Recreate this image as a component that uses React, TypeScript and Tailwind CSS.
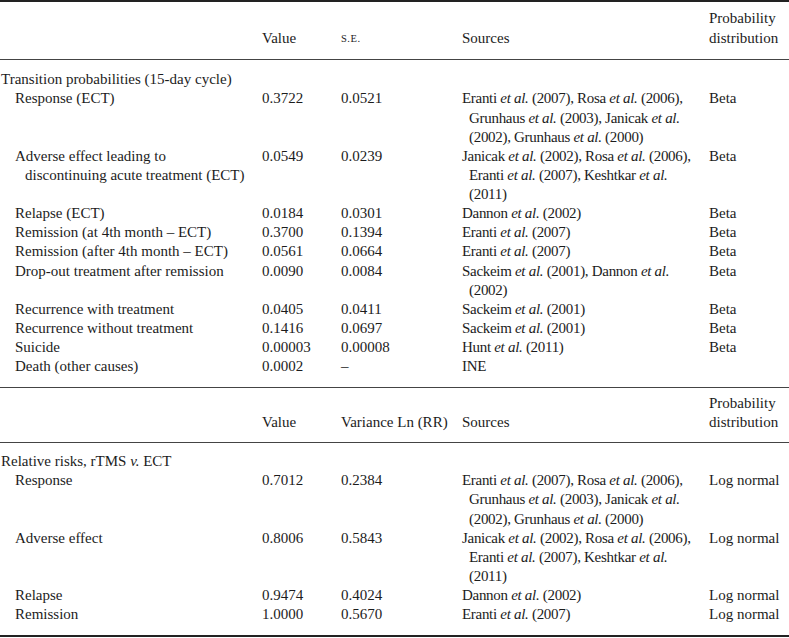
import React from 'react';

type Row = {
  label: React.ReactNode;
  value: string;
  spread: string;
  sources: React.ReactNode;
  dist?: string;
};

const cols = 'grid grid-cols-[262px_79px_121px_247px_80px]';

const responseSources = (
  <>
    Eranti <i>et al.</i> (2007), Rosa <i>et al.</i> (2006),
    <br />
    Grunhaus <i>et al.</i> (2003), Janicak <i>et al.</i>
    <br />
    (2002), Grunhaus <i>et al.</i> (2000)
  </>
);

const adverseSources = (
  <>
    Janicak <i>et al.</i> (2002), Rosa <i>et al.</i> (2006),
    <br />
    Eranti <i>et al.</i> (2007), Keshtkar <i>et al.</i>
    <br />
    (2011)
  </>
);

const transitionRows: Row[] = [
  { label: 'Response (ECT)', value: '0.3722', spread: '0.0521', sources: responseSources, dist: 'Beta' },
  {
    label: (
      <>
        Adverse effect leading to
        <br />
        discontinuing acute treatment (ECT)
      </>
    ),
    value: '0.0549',
    spread: '0.0239',
    sources: adverseSources,
    dist: 'Beta',
  },
  { label: 'Relapse (ECT)', value: '0.0184', spread: '0.0301', sources: <>Dannon <i>et al.</i> (2002)</>, dist: 'Beta' },
  { label: 'Remission (at 4th month – ECT)', value: '0.3700', spread: '0.1394', sources: <>Eranti <i>et al.</i> (2007)</>, dist: 'Beta' },
  { label: 'Remission (after 4th month – ECT)', value: '0.0561', spread: '0.0664', sources: <>Eranti <i>et al.</i> (2007)</>, dist: 'Beta' },
  {
    label: 'Drop-out treatment after remission',
    value: '0.0090',
    spread: '0.0084',
    sources: (
      <>
        Sackeim <i>et al.</i> (2001), Dannon <i>et al.</i>
        <br />
        (2002)
      </>
    ),
    dist: 'Beta',
  },
  { label: 'Recurrence with treatment', value: '0.0405', spread: '0.0411', sources: <>Sackeim <i>et al.</i> (2001)</>, dist: 'Beta' },
  { label: 'Recurrence without treatment', value: '0.1416', spread: '0.0697', sources: <>Sackeim <i>et al.</i> (2001)</>, dist: 'Beta' },
  { label: 'Suicide', value: '0.00003', spread: '0.00008', sources: <>Hunt <i>et al.</i> (2011)</>, dist: 'Beta' },
  { label: 'Death (other causes)', value: '0.0002', spread: '–', sources: 'INE' },
];

const riskRows: Row[] = [
  { label: 'Response', value: '0.7012', spread: '0.2384', sources: responseSources, dist: 'Log normal' },
  { label: 'Adverse effect', value: '0.8006', spread: '0.5843', sources: adverseSources, dist: 'Log normal' },
  { label: 'Relapse', value: '0.9474', spread: '0.4024', sources: <>Dannon <i>et al.</i> (2002)</>, dist: 'Log normal' },
  { label: 'Remission', value: '1.0000', spread: '0.5670', sources: <>Eranti <i>et al.</i> (2007)</>, dist: 'Log normal' },
];

function Header({ spreadLabel, className }: { spreadLabel: React.ReactNode; className: string }) {
  return (
    <div className={`${cols} items-end ${className}`}>
      <div />
      <div>Value</div>
      <div>{spreadLabel}</div>
      <div>Sources</div>
      <div>
        Probability
        <br />
        distribution
      </div>
    </div>
  );
}

function Body({ title, rows, className }: { title: React.ReactNode; rows: Row[]; className: string }) {
  return (
    <div className={`${cols} ${className}`}>
      <div className="col-span-5 pl-[1px]">{title}</div>
      {rows.map((r, i) => (
        <React.Fragment key={i}>
          <div className="pl-[25px] -indent-[10px]">{r.label}</div>
          <div>{r.value}</div>
          <div>{r.spread}</div>
          <div className="pl-[7px] -indent-[7px] tracking-[-0.3px]">{r.sources}</div>
          <div>{r.dist}</div>
        </React.Fragment>
      ))}
    </div>
  );
}

export default function App() {
  return (
    <div className="w-[789px] h-[638px] bg-white text-[#1c1c1c] font-['Liberation_Serif',serif] text-[15px] leading-[19.13px] whitespace-nowrap">
      <div className="h-[2px] bg-[#222]" />
      <Header spreadLabel={<span className="text-[10.5px] tracking-[0.5px]">S.E.</span>} className="pt-[7.4px] pb-[11.3px]" />
      <div className="h-px bg-[#444]" />
      <Body title="Transition probabilities (15-day cycle)" rows={transitionRows} className="pt-[10.4px] pb-[10.5px]" />
      <div className="h-px bg-[#444]" />
      <Header spreadLabel="Variance Ln (RR)" className="pt-[6.4px] pb-[9.3px]" />
      <div className="h-px bg-[#444]" />
      <Body
        title={
          <>
            Relative risks, rTMS <i>v.</i> ECT
          </>
        }
        rows={riskRows}
        className="pt-[9.4px] pb-[10.4px]"
      />
      <div className="h-[2px] bg-[#222]" />
    </div>
  );
}
